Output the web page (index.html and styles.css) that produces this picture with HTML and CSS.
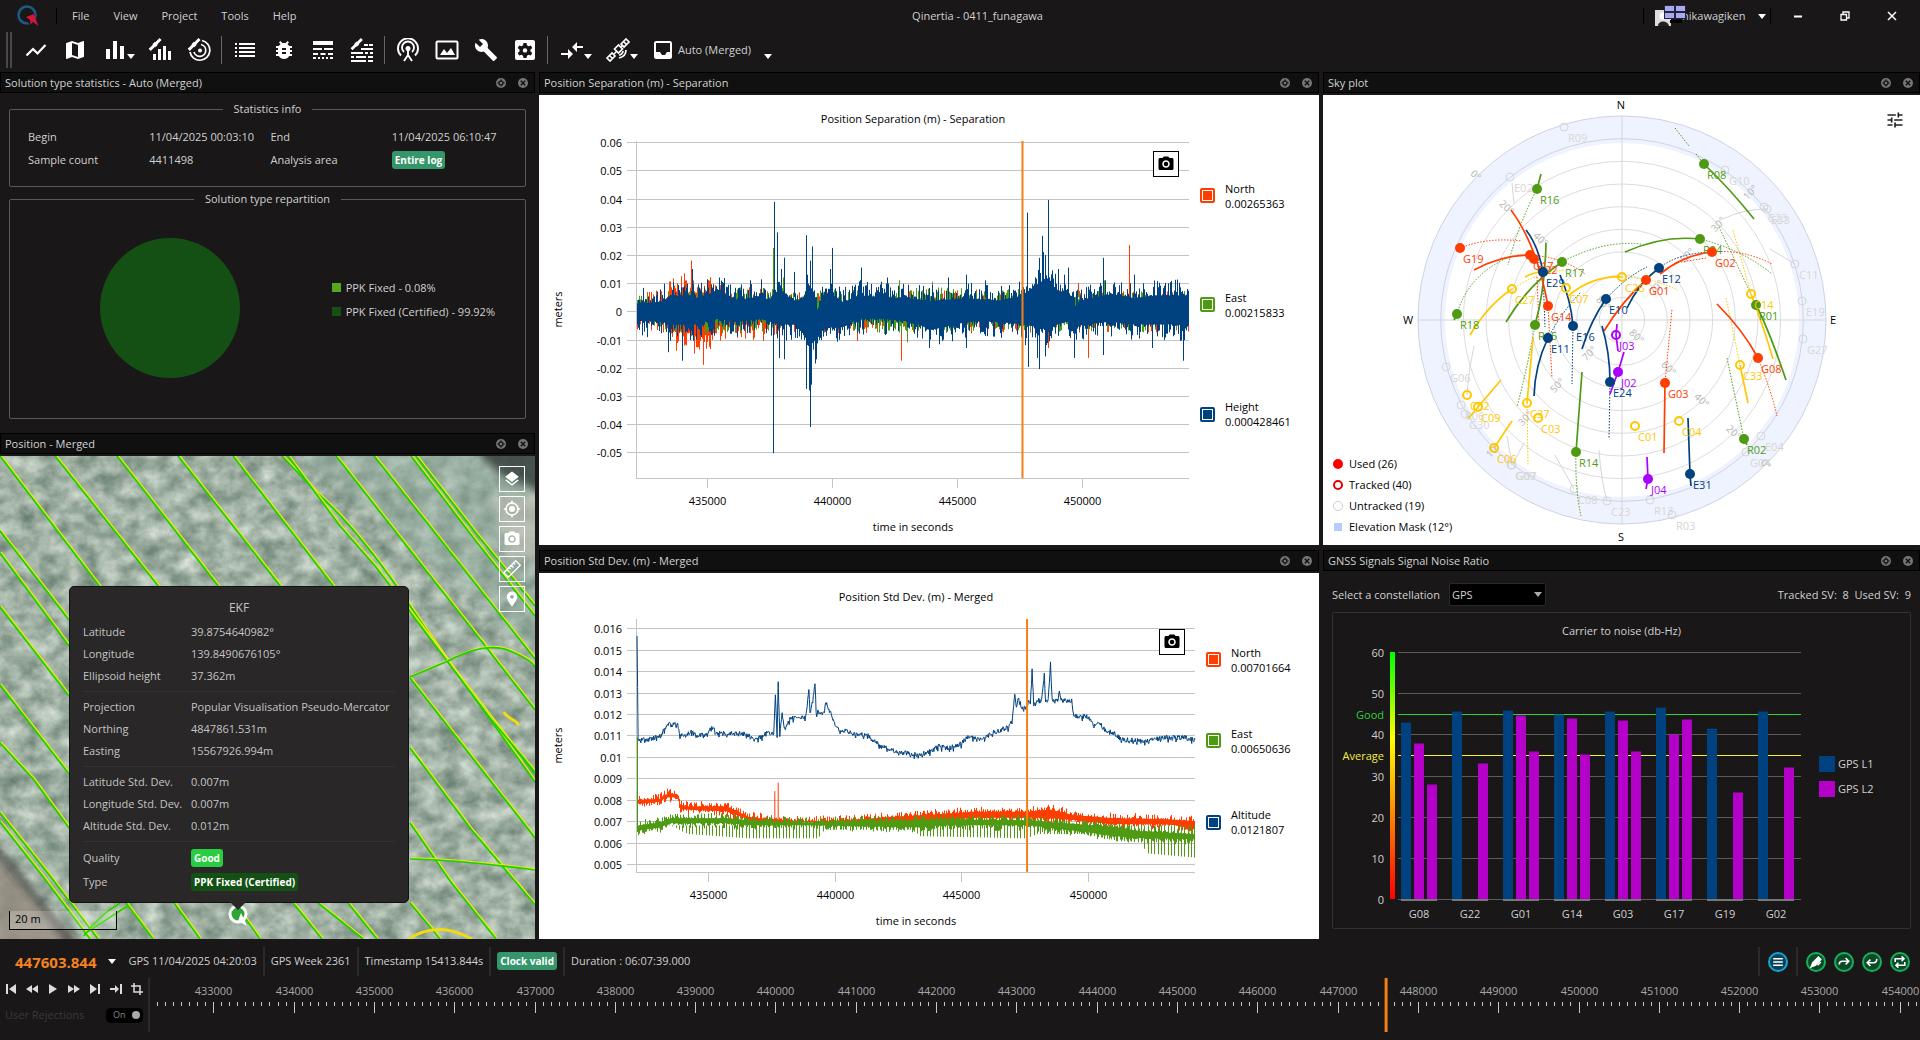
FILE: index.html
```html
<!doctype html>
<html lang="en">
  <head>
    <meta charset="utf-8">
    <meta name="viewport" content="width=device-width, initial-scale=1">

    <title>Qinertia - 0411_funagawa</title>

    <link rel="stylesheet" href="styles.css">
  </head>
  <body>

  <!-- shared icons -->
  <svg class="sprite" aria-hidden="true">
    <symbol id="i-sat" viewBox="0 0 24 24">
      <path d="M2 13l5-5 2.500 2.500-5 5zM10 5l5-5 2.500 2.500-5 5zM6.500 7.500l3-3 3.500 3.500-3 3z"/>
    </symbol>
    <symbol id="i-gear" viewBox="0 0 12 12">
      <circle cx="6" cy="6" r="5" fill="#777576"/>
      <circle cx="6" cy="6" r="2" fill="none" stroke="#1a1819" stroke-width="1.400"/>
      <path d="M6 2.200v1.600M6 8.200v1.600M2.200 6h1.600M8.200 6h1.600" stroke="#1a1819"/>
    </symbol>
    <symbol id="i-close" viewBox="0 0 12 12">
      <circle cx="6" cy="6" r="5" fill="#777576"/>
      <path d="M3.800 3.800l4.400 4.400M8.200 3.800l-4.400 4.400" stroke="#111" stroke-width="1.400"/>
    </symbol>
    <symbol id="i-camera" viewBox="0 0 24 24">
      <path fill-rule="evenodd" d="M9 2L7.170 4H4c-1.100 0-2 .9-2 2v12c0 1.100.9 2 2 2h16c1.100 0 2-.9 2-2V6c0-1.100-.9-2-2-2h-3.170L15 2H9zm3 15c-2.760 0-5-2.240-5-5s2.240-5 5-5 5 2.240 5 5-2.240 5-5 5z"/>
      <circle cx="12" cy="12" r="3"/>
    </symbol>
  </svg>

  <header class="titlebar">
    <svg class="logo" viewBox="0 0 24 24">
      <circle cx="11" cy="11" r="8.500" fill="none" stroke="#1d5a85" stroke-width="2.600"/>
      <path d="M8 12l10-3 1 4 4 9-6-3-4 1z" fill="#171516"/>
      <path d="M10 13l8-3 4.500 12-5.500-4-2.500 2-.5-4z" fill="#d3143c"/>
    </svg>
    <nav class="menu">
      <button type="button">File</button>
      <button type="button">View</button>
      <button type="button">Project</button>
      <button type="button">Tools</button>
      <button type="button">Help</button>
    </nav>
    <h1>Qinertia - 0411_funagawa</h1>
    <div class="window-side">
      <button type="button" class="user">
        <svg width="32" height="24" viewBox="0 0 32 24">
          <path d="M1 7h16v16H1z" fill="#ddd"/>
          <circle cx="9" cy="13" r="3.500" fill="#fff"/>
          <path d="M4 23c0-6 10-6 11 0z" fill="#222"/>
          <path d="M10 2h22v14H10z" fill="#23233c"/>
          <path d="M11 3h9v5h-9zM22 3h9v5h-9zM11 10h9v5h-9zM22 10h9v5h-9z" fill="#a9a9ee"/>
          <path d="M16 17h12v3H16z" fill="#000"/>
        </svg>
        <span>nikawagiken</span><i class="caret"></i>
      </button>
      <button type="button" aria-label="Minimize"><svg width="10" height="10"><path d="M1 5.500h8" stroke="#fff" stroke-width="2"/></svg></button>
      <button type="button" aria-label="Restore"><svg width="10" height="10"><path d="M1 3.500h5.500V9H1zM3 3V1h6v6H7" fill="none" stroke="#fff" stroke-width="1.300"/></svg></button>
      <button type="button" aria-label="Close"><svg width="10" height="10"><path d="M1 1l8 8M9 1L1 9" stroke="#fff" stroke-width="1.500"/></svg></button>
    </div>
  </header>

  <div class="toolbar">
    <i class="grip"></i>
    <button type="button" aria-label="Plot"><svg viewBox="0 0 24 24"><path d="M2.500 17.500L9 11l4.500 4.500L21.500 7" fill="none" stroke="#fff" stroke-width="2.200"/></svg></button>
    <button type="button" aria-label="Map"><svg viewBox="0 0 24 24"><path d="M20.500 3l-.16.030L15 5.100 9 3 3.360 4.900c-.21.070-.36.250-.36.480V20.500c0 .28.220.5.5.5l.16-.030L9 18.900l6 2.100 5.640-1.900c.21-.07.36-.25.36-.48V3.500c0-.28-.22-.5-.5-.5zM15 19l-6-2.110V5l6 2.110V19z"/></svg></button>
    <button type="button" class="drop" aria-label="Statistics"><svg viewBox="0 0 24 24"><path d="M3 11h4v10H3zM10 3h4v18h-4zM17 8h4v13h-4z"/></svg><i class="caret"></i></button>
    <button type="button" aria-label="Signal levels"><svg viewBox="0 0 24 24"><use href="#i-sat" x="-1" y="0" width="20" height="20"/><path d="M5 16h3v6H5zM10 11h3v11h-3zM15 8h3v14h-3zM20 13h3v9h-3z"/></svg></button>
    <button type="button" aria-label="Sky plot"><svg viewBox="0 0 24 24"><g fill="none" stroke="#fff" stroke-width="1.700"><path d="M15 2.500A10 10 0 1 1 3 14"/><path d="M14 6.500A6 6 0 1 1 7 14"/></g><circle cx="13" cy="12.500" r="2"/><use href="#i-sat" x="-1" y="0" width="20" height="20"/></svg></button>
    <i class="sep"></i>
    <button type="button" aria-label="Events"><svg viewBox="0 0 24 24"><path d="M2 5h2v2H2zM2 9h2v2H2zM2 13h2v2H2zM2 17h2v2H2zM6 5h16v2H6zM6 9h16v2H6zM6 13h16v2H6zM6 17h16v2H6z"/></svg></button>
    <button type="button" aria-label="Debug"><svg viewBox="0 0 24 24"><path d="M20 8h-2.810c-.45-.78-1.070-1.450-1.820-1.960L17 4.410 15.590 3l-2.170 2.170C12.960 5.060 12.490 5 12 5c-.49 0-.96.060-1.410.170L8.410 3 7 4.410l1.620 1.630C7.880 6.550 7.260 7.220 6.810 8H4v2h2.090c-.05.330-.09.660-.09 1v1H4v2h2v1c0 .340.040.670.090 1H4v2h2.810c1.040 1.790 2.970 3 5.190 3s4.150-1.210 5.190-3H20v-2h-2.090c.05-.33.090-.66.090-1v-1h2v-2h-2v-1c0-.34-.04-.67-.09-1H20V8zm-6 8h-4v-2h4v2zm0-4h-4v-2h4v2z"/></svg></button>
    <button type="button" aria-label="Timeline"><svg viewBox="0 0 24 24"><path d="M2 17h5v-2H2zm7.500 0h5v-2h-5zm7.500 0h5v-2h-5zM2 21h3v-2H2zm5 0h2v-2H7zm4 0h2v-2h-2zm4 0h2v-2h-2zm4 0h3v-2h-3zM2 12h9v-2H2zm11 0h9v-2h-9zM2 3v4h20V3z"/></svg></button>
    <button type="button" aria-label="Signal timeline"><svg viewBox="0 0 24 24"><use href="#i-sat" x="-1" y="0" width="19" height="19"/><path d="M14 6h4v2h-4zM19 6h4v2h-4zM11 10h12v2H11zM1 14h12v2H1zM15 14h3v2h-3zM20 14h3v2h-3zM1 18h3v2H1zM6 18h10v2H6zM18 18h5v2h-5zM1 22h15v2H1zM18 22h5v2h-5z"/></svg></button>
    <i class="sep"></i>
    <button type="button" aria-label="Base station"><svg viewBox="0 0 24 24"><g fill="none" stroke="#fff" stroke-width="1.900"><path d="M5 17.500A10 10 0 1 1 19 17.500"/><path d="M8 14A6 6 0 1 1 16 14"/><path d="M12 11v6l-4 6M12 17l4 6"/></g><circle cx="12" cy="10.500" r="2.500"/></svg></button>
    <button type="button" aria-label="Image"><svg viewBox="0 0 24 24"><rect x="1.500" y="3.500" width="21" height="17" rx="1" fill="none" stroke="#fff" stroke-width="2"/><path d="M5 17l4-6 3 4 4-5 4 7z"/></svg></button>
    <button type="button" aria-label="Tools"><svg viewBox="0 0 24 24"><path d="M22.700 19l-9.100-9.100c.9-2.300.4-5-1.500-6.900-2-2-5-2.400-7.400-1.300L9 6 6 9 1.600 4.700C.4 7.100.9 10.100 2.900 12.100c1.900 1.900 4.600 2.400 6.900 1.500l9.100 9.100c.4.4 1 .4 1.400 0l2.300-2.300c.5-.4.5-1.100.1-1.400z"/></svg></button>
    <button type="button" aria-label="Settings"><svg viewBox="0 0 24 24"><rect x="2" y="2" width="20" height="20" rx="2"/><path d="M10.500 5h3l.5 2.300 1.500.9 2.300-.8 1.500 2.600-1.800 1.600v1.800l1.800 1.600-1.500 2.600-2.300-.8-1.500.9-.5 2.300h-3l-.5-2.300-1.500-.9-2.300.8L4.700 15l1.800-1.600v-1.800L4.700 10l1.500-2.600 2.300.8 1.500-.9z" fill="#171516"/><circle cx="12" cy="12.400" r="2.200"/></svg></button>
    <i class="sep"></i>
    <button type="button" class="drop" aria-label="Processing direction"><svg viewBox="0 0 24 24"><path d="M1 15h7v-4l5 5-5 5v-4H1zM23 8h-6V4l-5 5 5 5v-4h6z"/></svg><i class="caret"></i></button>
    <button type="button" class="drop" aria-label="Satellites"><svg viewBox="0 0 24 24"><g fill="none" stroke="#fff" stroke-width="1.700"><path d="M15 6l5-5 3 3-5 5zM1 20l5-5 3 3-5 5zM17.500 3.500l3 3M3.500 17.500l3 3"/><path d="M8.500 11l4-4 4 4-4 4z"/><path d="M20 12c0 5-3 7-7 8M17 13c0 2-2 4-4 4M15 9l2-2M8 16l3-3"/></g></svg><i class="caret"></i></button>
    <button type="button" class="session"><svg viewBox="0 0 24 24"><path fill-rule="evenodd" d="M5 3h14c1 0 2 1 2 2v14c0 1-1 2-2 2H5c-1 0-2-1-2-2V5c0-1 1-2 2-2zm0 2v9h4l2 3h3l2-3h3V5z"/></svg><span>Auto (Merged)</span><i class="caret"></i></button>
  </div>

  <main class="docks">
    <div class="column">
      <section class="dock stats">
        <header class="dock-bar"><h2>Solution type statistics - Auto (Merged)</h2><button type="button" aria-label="Options"><svg><use href="#i-gear"/></svg></button><button type="button" aria-label="Close"><svg><use href="#i-close"/></svg></button></header>
        <div class="stats-body">
          <fieldset class="info">
            <legend>Statistics info</legend>
            <dl>
              <dt>Begin</dt><dd>11/04/2025 00:03:10</dd>
              <dt>End</dt><dd>11/04/2025 06:10:47</dd>
              <dt>Sample count</dt><dd>4411498</dd>
              <dt>Analysis area</dt><dd><span class="badge teal">Entire log</span></dd>
            </dl>
          </fieldset>
          <fieldset class="repartition">
            <legend>Solution type repartition</legend>
            <div class="share">
              <svg class="pie" viewBox="0 0 140 140"><circle cx="70" cy="70" r="70" fill="#145014"/></svg>
              <ul>
                <li class="fixed">PPK Fixed - 0.08%</li>
                <li class="certified">PPK Fixed (Certified) - 99.92%</li>
              </ul>
            </div>
          </fieldset>
        </div>
      </section>

      <section class="dock position">
        <header class="dock-bar"><h2>Position - Merged</h2><button type="button" aria-label="Options"><svg><use href="#i-gear"/></svg></button><button type="button" aria-label="Close"><svg><use href="#i-close"/></svg></button></header>
        <div class="map">
          <svg class="ground" viewBox="0 0 535 483" preserveAspectRatio="xMidYMid slice">
            <defs>
              <filter id="coarse" x="0" y="0" width="100%" height="100%" color-interpolation-filters="sRGB">
                <feTurbulence type="fractalNoise" baseFrequency=".05 .06" numOctaves="4" seed="8"/>
                <feColorMatrix values=".55 0 0 0 .35  .48 0 0 0 .45  .5 0 0 0 .39  0 0 0 0 1"/>
              </filter>
              <filter id="soft" x="-50%" y="-50%" width="200%" height="200%"><feGaussianBlur stdDeviation="4"/></filter>
            </defs>
            <rect width="535" height="483" filter="url(#coarse)"/>
            <path d="M290 -10L545 200V-10z" fill="#8fab9c" opacity=".45" filter="url(#soft)"/>
            <path d="M475 -10l20 25 50 24v-49z" fill="#2c3230" opacity=".75" filter="url(#soft)"/>
            <path d="M490 40l50 0v70l-30-10z" fill="#cfc6bf" opacity=".5" filter="url(#soft)"/>
            <path d="M-5 395l40 50 45 45H-5z" fill="#978c80" opacity=".85" filter="url(#soft)"/>
            <path d="M-5 392l38 46 40 50" stroke="#262422" stroke-width="5" fill="none" filter="url(#soft)"/>
            <g id="tracks"></g>
            <path d="M504 256c3 7 10 6 15 13" fill="none" stroke="#f0dc10" stroke-width="3"/>
            <path d="M406 485q30-22 66-2" fill="none" stroke="#f0dc10" stroke-width="3"/>
            <circle cx="238" cy="458" r="8" fill="#2fa537" stroke="#fff" stroke-width="3"/>
            <path d="M241 457l6 13-9-5z" fill="#fff"/>
          </svg>
          <div class="map-tools">
            <button type="button" aria-label="Layers"><svg viewBox="0 0 24 24"><path d="M11.990 18.540l-7.370-5.730L3 14.070l9 7 9-7-1.630-1.270-7.380 5.740zM12 16l7.360-5.730L21 9l-9-7-9 7 1.630 1.270L12 16z"/></svg></button>
            <button type="button" aria-label="Center"><svg viewBox="0 0 24 24"><g fill="none" stroke="#fff" stroke-width="2.200"><circle cx="12" cy="12" r="8"/><path d="M12 1v4M12 19v4M1 12h4M19 12h4"/></g><circle cx="12" cy="12" r="4"/></svg></button>
            <button type="button" aria-label="Snapshot"><svg viewBox="0 0 24 24"><use href="#i-camera"/></svg></button>
            <button type="button" aria-label="Measure"><svg viewBox="0 0 24 24"><path d="M1 17L17 1l6 6L7 23zM5 13l3 3M8 10l2 2M11 7l3 3M14 4l2 2" fill="none" stroke="#fff" stroke-width="1.800"/></svg></button>
            <button type="button" aria-label="Marker"><svg viewBox="0 0 24 24"><path d="M12 2C8.130 2 5 5.130 5 9c0 5.250 7 13 7 13s7-7.750 7-13c0-3.870-3.130-7-7-7zm0 9.500a2.500 2.500 0 0 1 0-5 2.500 2.500 0 0 1 0 5z"/></svg></button>
          </div>
          <div class="popup">
            <h3>EKF</h3>
            <dl>
              <dt>Latitude</dt><dd>39.8754640982°</dd>
              <dt>Longitude</dt><dd>139.8490676105°</dd>
              <dt>Ellipsoid height</dt><dd>37.362m</dd>
            </dl>
            <dl>
              <dt>Projection</dt><dd>Popular Visualisation Pseudo-Mercator</dd>
              <dt>Northing</dt><dd>4847861.531m</dd>
              <dt>Easting</dt><dd>15567926.994m</dd>
            </dl>
            <dl>
              <dt>Latitude Std. Dev.</dt><dd>0.007m</dd>
              <dt>Longitude Std. Dev.</dt><dd>0.007m</dd>
              <dt>Altitude Std. Dev.</dt><dd>0.012m</dd>
            </dl>
            <dl class="state">
              <dt>Quality</dt><dd><span class="badge good">Good</span></dd>
              <dt>Type</dt><dd><span class="badge cert">PPK Fixed (Certified)</span></dd>
            </dl>
          </div>
          <div class="scale">20 m</div>
        </div>
      </section>
    </div>

    <div class="column">
      <section class="dock separation">
        <header class="dock-bar"><h2>Position Separation (m) - Separation</h2><button type="button" aria-label="Options"><svg><use href="#i-gear"/></svg></button><button type="button" aria-label="Close"><svg><use href="#i-close"/></svg></button></header>
        <div class="chart">
          <div class="plot">
            <svg id="separation"></svg>
            <button type="button" class="snap" aria-label="Save image"><svg viewBox="0 0 24 24"><use href="#i-camera"/></svg></button>
          </div>
          <div class="legend wide">
            <label class="north"><input type="checkbox" checked><span>North<br>0.00265363</span></label>
            <label class="east"><input type="checkbox" checked><span>East<br>0.00215833</span></label>
            <label class="height"><input type="checkbox" checked><span>Height<br>0.000428461</span></label>
          </div>
        </div>
      </section>

      <section class="dock lower">
        <header class="dock-bar"><h2>Position Std Dev. (m) - Merged</h2><button type="button" aria-label="Options"><svg><use href="#i-gear"/></svg></button><button type="button" aria-label="Close"><svg><use href="#i-close"/></svg></button></header>
        <div class="chart">
          <div class="plot">
            <svg id="stddev"></svg>
            <button type="button" class="snap" aria-label="Save image"><svg viewBox="0 0 24 24"><use href="#i-camera"/></svg></button>
          </div>
          <div class="legend">
            <label class="north"><input type="checkbox" checked><span>North<br>0.00701664</span></label>
            <label class="east"><input type="checkbox" checked><span>East<br>0.00650636</span></label>
            <label class="height"><input type="checkbox" checked><span>Altitude<br>0.0121807</span></label>
          </div>
        </div>
      </section>
    </div>

    <div class="column">
      <section class="dock separation">
        <header class="dock-bar"><h2>Sky plot</h2><button type="button" aria-label="Options"><svg><use href="#i-gear"/></svg></button><button type="button" aria-label="Close"><svg><use href="#i-close"/></svg></button></header>
        <div class="sky">
          <svg id="sky" viewBox="0 0 597 450"></svg>
          <button type="button" class="tune" aria-label="Filter"><svg viewBox="0 0 24 24"><path d="M3 17v2h6v-2H3zM3 5v2h10V5H3zm10 16v-2h8v-2h-8v-2h-2v6h2zM7 9v2H3v2h4v2h2V9H7zm14 4v-2H11v2h10zm-6-4h2V7h4V5h-4V3h-2v6z"/></svg></button>
          <ul class="sky-legend">
            <li class="used">Used (26)</li>
            <li class="tracked">Tracked (40)</li>
            <li class="untracked">Untracked (19)</li>
            <li class="mask">Elevation Mask (12°)</li>
          </ul>
        </div>
      </section>

      <section class="dock lower">
        <header class="dock-bar"><h2>GNSS Signals Signal Noise Ratio</h2><button type="button" aria-label="Options"><svg><use href="#i-gear"/></svg></button><button type="button" aria-label="Close"><svg><use href="#i-close"/></svg></button></header>
        <div class="snr">
          <div class="snr-head">
            <label for="constellation">Select a constellation</label>
            <span class="select"><select id="constellation"><option>GPS</option><option>GLONASS</option><option>Galileo</option></select></span>
            <span class="counts">Tracked SV:&nbsp; 8&nbsp; Used SV:&nbsp; 9</span>
          </div>
          <div class="snr-box">
            <h3>Carrier to noise (db-Hz)</h3>
            <div class="snr-chart">
              <svg id="snr"></svg>
              <ul>
                <li class="l1">GPS L1</li>
                <li class="l2">GPS L2</li>
              </ul>
            </div>
          </div>
        </div>
      </section>
    </div>
  </main>

  <footer class="time">
    <div class="status">
      <button type="button" class="clock">447603.844<i class="caret"></i></button>
      <span>GPS 11/04/2025 04:20:03</span>
      <span>GPS Week 2361</span>
      <span>Timestamp 15413.844s</span>
      <span><b class="badge teal">Clock valid</b></span>
      <span>Duration : 06:07:39.000</span>
      <div class="actions">
        <button type="button" class="round blue" aria-label="Log"><svg viewBox="0 0 20 20"><path d="M4 6h12M4 10h12M4 14h12"/></svg></button>
        <i class="bar"></i>
        <button type="button" class="round" aria-label="Edit"><svg viewBox="0 0 20 20"><path d="M4 16l2-5 3 3zM7 10l6-6 3 3-6 6zM12 14l4-4" fill="#fff"/></svg></button>
        <button type="button" class="round" aria-label="Forward"><svg viewBox="0 0 20 20"><path d="M4 13c0-3 1-4 4-4h8M12 5l4 4-4 4"/></svg></button>
        <button type="button" class="round" aria-label="Backward"><svg viewBox="0 0 20 20"><path d="M16 6c0 3-1 5-4 5H4M8 7l-4 4 4 4"/></svg></button>
        <button type="button" class="round" aria-label="Merge"><svg viewBox="0 0 20 20"><path d="M4 10V6h11M12 3l3 3-3 3M16 10v4H5M8 11l-3 3 3 3"/></svg></button>
      </div>
    </div>
    <div class="timeline">
      <div class="player">
        <div class="keys">
          <button type="button" aria-label="First"><svg viewBox="0 0 12 12"><path d="M1 1h2v10H1zM11 1v10L4 6z"/></svg></button>
          <button type="button" aria-label="Rewind"><svg viewBox="0 0 12 12"><path d="M6 2v8L0 6zM12 2v8L6 6z"/></svg></button>
          <button type="button" aria-label="Play"><svg viewBox="0 0 12 12"><path d="M2 1l8 5-8 5z"/></svg></button>
          <button type="button" aria-label="Fast forward"><svg viewBox="0 0 12 12"><path d="M0 2l6 4-6 4zM6 2l6 4-6 4z"/></svg></button>
          <button type="button" aria-label="Last"><svg viewBox="0 0 12 12"><path d="M9 1h2v10H9zM1 1l7 5-7 5z"/></svg></button>
          <button type="button" aria-label="Go to"><svg viewBox="0 0 12 12"><path d="M10 1h2v10h-2zM0 5h5V2l4 4-4 4V7H0z"/></svg></button>
          <button type="button" aria-label="Crop"><svg viewBox="0 0 12 12"><path d="M3 0v9h9M0 3h9v9" fill="none" stroke="#ddd" stroke-width="1.500"/></svg></button>
        </div>
        <label class="reject">User Rejections <span class="toggle">On<input type="checkbox" checked disabled></span></label>
      </div>
      <svg id="ruler"></svg>
    </div>
  </footer>

  <script src="app.js"></script>
  </body>
</html>
```

FILE: styles.css
```css
*, *::before, *::after {
  box-sizing: border-box;
}

body {
  margin: 0;
  height: 100vh;
  min-height: 800px;
  display: flex;
  flex-direction: column;
  background-color: #191718;
  color: #d0d0d0;
  font-family: "Open Sans", "Noto Sans", sans-serif;
  font-size: 11px;
  line-height: 16px;
  overflow: hidden;
}

h1, h2, h3, dl, dd, ul {
  margin: 0;
  padding: 0;
  font-size: 11px;
  font-weight: normal;
  list-style: none;
}

button {
  display: flex;
  align-items: center;
  justify-content: center;
  padding: 0;
  border: 0;
  background: none;
  color: inherit;
  font: inherit;
}

svg {
  display: block;
  flex-shrink: 0;
  fill: #fff;
}

svg text {
  font-family: "Open Sans", "Noto Sans", sans-serif;
  font-size: 11px;
}

.sprite {
  display: none;
}

.caret {
  border: 4px solid transparent;
  border-top: 5px solid #fff;
  border-bottom: 0;
}

.badge {
  display: inline-block;
  height: 18px;
  padding: 0 3px;
  border-radius: 3px;
  color: #fff;
  font-size: 10px;
  font-weight: bold;
  line-height: 18px;
}

.teal { background-color: #35966b; }
.good { background-color: #28cd41; }
.cert { background-color: #145014; }

/* title bar */

.titlebar {
  display: grid;
  grid-template-columns: 1fr auto 1fr;
  align-items: center;
  height: 32px;
  padding: 0 5px 0 16px;
  grid-template-areas: "left mid right";
}

.logo {
  grid-area: left;
  width: 24px;
  height: 24px;
}

.menu {
  grid-area: left;
  display: flex;
  gap: 24px;
  margin-left: 40px;
  padding-left: 15px;
  border-left: 1px solid #000;
}

.titlebar h1 {
  grid-area: mid;
  padding-left: 24px;
}

.window-side {
  grid-area: right;
  display: flex;
  justify-content: flex-end;
}

.window-side button {
  width: 47px;
}

.window-side .user {
  position: relative;
  width: 128px;
  margin-right: 3px;
  padding: 0 4px 0 24px;
  border: solid #000;
  border-width: 0 1px;
  justify-content: space-between;
}

.user svg {
  position: absolute;
  left: 10px;
  top: -5px;
}

.user span {
  padding-left: 14px;
}

/* toolbar */

.toolbar {
  display: flex;
  align-items: center;
  height: 40px;
  padding: 0 0 4px 6px;
}

.toolbar button {
  width: 39px;
  height: 32px;
}

.toolbar svg {
  width: 24px;
  height: 24px;
}

.toolbar .drop {
  width: 46px;
}

.toolbar .drop svg {
  margin-left: 2px;
}

.toolbar .caret {
  margin: 12px -2px 0 0;
}

.toolbar .session {
  width: auto;
  padding-left: 8px;
}

.session span {
  margin: 0 13px 0 3px;
}

.grip {
  width: 6px;
  height: 36px;
  margin-right: 4px;
  border: solid #4a4849;
  border-width: 0 2px;
}

.sep {
  width: 1px;
  height: 28px;
  margin: 0 3px;
  background-color: #666;
}

/* docks */

.docks {
  flex: 1;
  min-height: 0;
  display: grid;
  grid-template-columns: 535fr 780fr 597fr;
  gap: 4px;
}

.column {
  display: flex;
  flex-direction: column;
  gap: 5px;
  min-width: 0;
  min-height: 0;
}

.dock {
  display: flex;
  flex-direction: column;
  min-height: 0;
}

.stats { flex: 356 1 0; }
.position { flex: 506 1 0; }
.separation { flex: 473 1 0; }
.lower { flex: 389 1 0; }

.dock-bar {
  display: flex;
  align-items: center;
  height: 21px;
  margin-bottom: 2px;
  padding-left: 4px;
  border: 1px solid #000;
  background-color: #111011;
}

.dock-bar h2 {
  flex: 1;
}

.dock-bar button {
  width: 22px;
}

.dock-bar svg {
  width: 12px;
  height: 12px;
}

/* statistics */

.stats-body {
  flex: 1;
  display: flex;
  flex-direction: column;
  gap: 4px;
  padding: 6px 9px 9px;
}

fieldset {
  margin: 0;
  padding: 0 18px;
  border: 1px solid #5a5a5a;
  border-radius: 2px;
}

legend {
  margin: 0 auto;
  padding: 0 11px;
}

.info {
  height: 86px;
}

.info dl {
  display: grid;
  grid-template-columns: repeat(4, 1fr);
  grid-auto-rows: 23px;
  align-items: center;
  margin-top: 8px;
  margin-right: -6px;
}

.repartition {
  flex: 1;
}

.share {
  display: flex;
  align-items: center;
  justify-content: space-between;
  height: 100%;
  padding: 0 12px 10px 72px;
}

.pie {
  width: 140px;
}

.share ul {
  padding-bottom: 16px;
}

.share li {
  display: flex;
  align-items: center;
  gap: 5px;
  height: 24px;
}

.share li::before {
  content: "";
  width: 9px;
  height: 9px;
  background-color: #145014;
}

.share .fixed::before {
  background-color: #55a820;
}

/* map */

.map {
  position: relative;
  flex: 1;
  min-height: 0;
  overflow: hidden;
}

.ground {
  width: 100%;
  height: 100%;
}

.map-tools {
  position: absolute;
  top: 10px;
  right: 10px;
  display: flex;
  flex-direction: column;
  gap: 4px;
}

.map-tools button {
  width: 26px;
  height: 26px;
  border: 1px solid #fff;
}

.map-tools svg {
  width: 18px;
  height: 18px;
}

.popup {
  position: absolute;
  left: 69px;
  bottom: 36px;
  width: 340px;
  padding: 13px;
  padding-bottom: 8px;
  border: 1px solid #111;
  border-radius: 5px;
  background-color: #292728;
  color: #c4c4c4;
}

.popup::after {
  content: "";
  position: absolute;
  left: 160px;
  top: 100%;
  border: 8px solid transparent;
  border-top-color: #292728;
  border-bottom: 0;
}

.popup h3 {
  height: 21px;
  font-size: 12px;
  text-align: center;
}

.popup dl {
  display: grid;
  grid-template-columns: 108px 1fr;
  grid-auto-rows: 22px;
  align-items: center;
  margin-bottom: 4px;
  padding-bottom: 4px;
  border-bottom: 1px solid #333132;
  white-space: nowrap;
}

.popup .state {
  grid-auto-rows: 24px;
  margin: 0;
  padding: 0;
  border: 0;
}

.scale {
  position: absolute;
  left: 9px;
  bottom: 9px;
  width: 108px;
  height: 19px;
  padding-left: 5px;
  border: 1px solid #000;
  border-top: 0;
  background-color: rgba(255, 255, 255, 0.2);
  color: #000;
}

/* line charts */

.chart {
  flex: 1;
  min-height: 0;
  display: flex;
  background-color: #fff;
  color: #000;
}

.plot {
  position: relative;
  flex: 1;
  min-width: 0;
}

.plot > svg {
  width: 100%;
  height: 100%;
}

.plot text {
  fill: #000;
}

.snap {
  position: absolute;
  top: 56px;
  right: 21px;
  width: 26px;
  height: 26px;
  border: 1px solid #000;
  background-color: #fff;
}

.snap svg {
  width: 18px;
  height: 18px;
  fill: #000;
}

.legend {
  width: 113px;
  padding: 46px 0 76px;
  display: flex;
  flex-direction: column;
  justify-content: space-around;
  line-height: 15px;
}

.wide {
  width: 119px;
}

.legend label {
  display: flex;
  align-items: center;
  gap: 10px;
}

.legend input {
  appearance: none;
  width: 15px;
  height: 15px;
  margin: 0;
  border: 2px solid;
  border-radius: 2px;
  background-color: currentColor;
  box-shadow: inset 0 0 0 1px #fff;
}

.north input { color: #ff3d00; }
.east input { color: #4e9a12; }
.height input { color: #00417f; }

/* sky plot */

.sky {
  position: relative;
  flex: 1;
  min-height: 0;
  background-color: #fff;
  color: #000;
}

.sky > svg {
  width: 100%;
  height: 100%;
  fill: none;
}

.sky .ring {
  font-size: 10px;
}

.tune {
  position: absolute;
  top: 15px;
  right: 15px;
}

.tune svg {
  width: 20px;
  height: 20px;
  fill: #222;
}

.sky-legend {
  position: absolute;
  left: 10px;
  bottom: 8px;
}

.sky-legend li {
  display: flex;
  align-items: center;
  gap: 6px;
  height: 21px;
}

.sky-legend li::before {
  content: "";
  width: 10px;
  height: 10px;
  border: 2px solid #e60000;
  border-radius: 50%;
}

.sky-legend .used::before { background-color: #f00; border-color: #f00; }
.sky-legend .untracked::before { border: 1px solid #ccc; }
.sky-legend .mask::before { border: 1px solid #fff; border-radius: 0; background-color: #b4ccff; }

/* signal noise ratio */

.snr {
  flex: 1;
  min-height: 0;
  display: flex;
  flex-direction: column;
  padding: 10px 9px;
}

.snr-head {
  display: flex;
  align-items: center;
  gap: 9px;
  height: 23px;
}

.select {
  position: relative;
}

.select::after {
  content: "";
  position: absolute;
  right: 4px;
  top: 9px;
  border: 4px solid transparent;
  border-top: 5px solid #aaa;
  border-bottom: 0;
}

select {
  appearance: none;
  width: 97px;
  height: 23px;
  padding: 0 2px;
  border: 1px solid #2a2829;
  border-radius: 2px;
  background-color: #000;
  color: inherit;
  font: inherit;
}

.counts {
  margin-left: auto;
}

.snr-box {
  flex: 1;
  min-height: 0;
  display: flex;
  flex-direction: column;
  margin-top: 6px;
  border: 1px solid #333132;
  border-radius: 2px;
}

.snr-box h3 {
  padding-top: 10px;
  text-align: center;
}

.snr-chart {
  flex: 1;
  min-height: 0;
  display: flex;
}

.snr-chart > svg {
  flex: 1;
  min-width: 0;
  height: 100%;
}

.snr-chart ul {
  width: 109px;
  padding: 112px 0 0 18px;
}

.snr-chart li {
  display: flex;
  align-items: center;
  gap: 3px;
  height: 25px;
}

.snr-chart li::before {
  content: "";
  width: 16px;
  height: 16px;
  background-color: #00417f;
}

.snr-chart .l2::before {
  background-color: #b400c8;
}

/* time bar */

.time {
  height: 101px;
  padding-top: 6px;
}

.status {
  display: flex;
  align-items: center;
  height: 33px;
  padding-left: 15px;
}

.status > span {
  padding: 5px 6px;
  height: 29px;
  line-height: 18px;
  border-left: 2px solid #2c2a2b;
}

.status > span:nth-of-type(1) {
  border: 0;
}

.clock {
  margin-right: 6px;
  color: #f58220;
  font-size: 15px;
  font-weight: bold;
  gap: 12px;
}

.actions {
  display: flex;
  align-items: center;
  gap: 8px;
  margin-left: auto;
  padding: 0 10px 0 8px;
  border-left: 2px solid #2c2a2b;
}

.bar {
  width: 2px;
  height: 29px;
  background-color: #2c2a2b;
}

.round {
  width: 20px;
  height: 20px;
  border: 2px solid #18b05a;
  border-radius: 50%;
  background-color: #0a4a28;
}

.blue {
  border-color: #12a5d0;
  background-color: #0c4258;
}

.round svg {
  width: 16px;
  height: 16px;
  fill: none;
  stroke: #fff;
  stroke-width: 2;
}

.timeline {
  display: flex;
  height: 54px;
}

.player {
  width: 150px;
  border-right: 2px solid #2c2a2b;
}

.keys {
  display: flex;
  gap: 9px;
  padding: 5px 5px 0;
}

.keys svg {
  width: 12px;
  height: 12px;
  fill: #ddd;
}

.reject {
  display: flex;
  align-items: center;
  justify-content: space-between;
  padding: 12px 5px 0;
  color: #3c3a3b;
}

.toggle {
  display: flex;
  align-items: center;
  justify-content: space-between;
  width: 37px;
  height: 15px;
  padding: 0 3px 0 7px;
  border-radius: 5px;
  background-color: #000;
  color: #888;
  font-size: 9px;
}

.toggle input {
  appearance: none;
  width: 8px;
  height: 8px;
  margin: 0;
  border-radius: 50%;
  background-color: #aaa;
}

#ruler {
  flex: 1;
  min-width: 0;
  height: 54px;
}
```

FILE: app.js
```js
var ORANGE = '#f57f17', RED = '#ff3d00', GREEN = '#4e9a12', BLUE = '#00417f', YELLOW = '#ffc800', PURPLE = '#aa00ff';
var NOW = 447603.844;
var seed = 7;

var rnd = function() {
  seed = (seed * 16807) % 2147483647;
  return seed / 2147483647;
}

var line = function(x1, y1, x2, y2, color, w) {
  return '<line x1="' + x1 + '" y1="' + y1 + '" x2="' + x2 + '" y2="' + y2 + '" stroke="' + color + '" stroke-width="' + (w || 1) + '"/>';
}

var text = function(x, y, s, anchor, extra) {
  return '<text x="' + x + '" y="' + y + '" text-anchor="' + (anchor || 'middle') + '" ' + (extra || '') + '>' + s + '</text>';
}

var path = function(d, color, w, extra) {
  return '<path d="' + d + '" fill="none" stroke="' + color + '" stroke-width="' + (w || 1) + '" ' + (extra || '') + '/>';
}

// linear interpolation in a list of [position, value...]
var at = function(list, p, k) {
  for(var i = 1; i < list.length; i++) {
    if(p <= list[i][0]) {
      var a = list[i-1], b = list[i];
      return a[k] + (b[k] - a[k]) * (p - a[0]) / (b[0] - a[0]);
    }
  }
  return list[list.length-1][k];
}

var frame = function(svg, o) {
  var w = svg.clientWidth, h = svg.clientHeight;
  var c = { l: 98, r: w - 11, t: 46, b: h - 67 };
  c.x = function(t) { return c.l + (t - o.t0) / (o.t1 - o.t0) * (c.r - c.l); }
  c.p = function(p) { return c.l + p / 1000 * (c.r - c.l); }
  c.y = function(v) { return c.b - (v - o.min) / (o.max - o.min) * (c.b - c.t); }
  var s = text((c.l + c.r) / 2, 28, o.title);
  o.ticks.forEach(function(v) {
    var y = Math.round(c.y(v)) + .5;
    s += line(c.l - 10, y, c.r, y, '#c4c4c4', 1) + text(83, y + 4, v, 'end');
  });
  for(var t = 435000; t <= 450000; t += 5000) {
    var x = Math.round(c.x(t)) + .5;
    s += line(x, c.b, x, c.b + 10, '#c4c4c4') + text(x, c.b + 27, t);
  }
  s += line(c.l - .5, c.t, c.l - .5, c.b, '#c4c4c4') + line(c.l - 1, c.b + .5, c.r, c.b + .5, '#c4c4c4');
  s += text((c.l + c.r) / 2, c.b + 53, 'time in seconds');
  s += text(0, 0, 'meters', 'middle', 'transform="translate(23 ' + (c.t + c.b) / 2 + ') rotate(-90)"');
  c.html = s;
  return c;
}

// one vertical stroke per pixel column between the two envelopes
var band = function(c, env, noise, spikes) {
  var d = '';
  for(var x = c.l; x < c.r; x++) {
    var p = (x - c.l) / (c.r - c.l) * 1000;
    var hi = at(env, p, 1), lo = at(env, p, 2);
    hi += (Math.pow(rnd(), 2.5) * 1.3 - .3) * noise;
    lo -= (Math.pow(rnd(), 2.5) * 1.3 - .3) * noise;
    d += 'M' + (x + .5) + ' ' + c.y(hi).toFixed(1) + 'V' + c.y(lo).toFixed(1);
  }
  (spikes || []).forEach(function(s) {
    var sx = Math.round(c.p(s[0])) + .5;
    d += 'M' + sx + ' ' + c.y(0.005).toFixed(1) + 'V' + c.y(s[1]).toFixed(1);
  });
  return d;
}

var drawSeparation = function() {
  var svg = document.getElementById('separation');
  var ticks = ['0.06','0.05','0.04','0.03','0.02','0.01','0','-0.01','-0.02','-0.03','-0.04','-0.05'];
  var c = frame(svg, { title: 'Position Separation (m) - Separation', t0: 432203, t1: 454255, min: -.0591, max: .0604, ticks: ticks });
  seed = 7;
  var north = [[0,.003,-.003],[48,.004,-.004],[60,.008,-.008],[130,.008,-.010],[150,.005,-.006],[210,.004,-.006],[240,.003,-.004],[440,.003,-.0035],[780,.0035,-.0035],[1000,.003,-.003]];
  var east = [[0,.002,-.003],[60,.004,-.004],[130,.005,-.005],[320,.005,-.003],[420,.004,-.004],[460,.005,-.005],[600,.005,-.004],[800,.004,-.004],[1000,.004,-.004]];
  var height = [[0,.004,-.0045],[45,.0048,-.005],[60,.007,-.006],[105,.006,-.006],[145,.0085,-.004],[185,.005,-.005],[225,.007,-.004],[240,.005,-.005],[255,.009,-.006],[285,.005,-.006],[300,.006,-.009],[310,.011,-.013],[320,.008,-.012],[326,.002,-.011],[335,.005,-.008],[350,.008,-.007],[372,.004,-.007],[400,.007,-.004],[440,.0065,-.004],[500,.0055,-.005],[530,.005,-.008],[600,.006,-.005],[650,.005,-.005],[700,.007,-.006],[725,.011,-.007],[745,.013,-.008],[760,.008,-.006],[780,.009,-.005],[792,.003,-.010],[800,.005,-.006],[860,.0075,-.005],[900,.006,-.006],[940,.007,-.006],[1000,.007,-.006]];
  var s = path(band(c, north, .0045, [[98,.018],[86,.0135],[120,-.019],[82,-.016],[103,-.015],[70,-.014],[267,.019],[478,-.0175],[892,.0235],[817,-.0165],[799,.010],[306,-.013],[745,-.013],[399,-.0105],[228,-.0105]]), RED);
  s += path(band(c, east, .0035, [[247,.0225],[264,.012],[474,.011],[534,.0105],[490,-.011],[846,.011]]), GREEN);
  s += path(band(c, height, .0045, [[249,.0388],[247,-.0503],[253,.028],[254,.02],[260,.015],[257,-.0165],[267,.019],[267,-.017],[284,.014],[307,.027],[307,-.0275],[311,-.028],[313,.018],[313,-.041],[315,-.026],[317,.023],[322,-.0185],[325,-.017],[349,.015],[353,.0225],[405,.0155],[453,.012],[529,-.013],[564,.012],[596,.013],[596,-.013],[631,.011],[703,-.012],[707,.035],[708,-.0197],[724,-.0165],[729,.019],[729,-.0205],[733,.0268],[735,.021],[740,.02],[740,-.016],[745,.0395],[751,.0145],[762,.015],[774,.013],[781,.0155],[792,-.0165],[845,.019],[845,-.0155],[901,.013],[933,-.013],[990,-.0175],[57,-.0145],[81,-.0175],[99,.015],[149,.012],[205,.011]]), BLUE);
  var x = c.x(NOW);
  svg.innerHTML = c.html + s + line(x, c.t, x, c.b, ORANGE, 2);
}

var altitude = [[0,15.64],[2,10.83],[21,10.8],[43,11],[54,11.5],[73,11.5],[77,11.05],[88,11],[97,11.15],[106,11],[125,11.05],[134,11.4],[143,11.1],[188,11.1],[215,10.85],[233,11.1],[245,11.1],[248,12.9],[251,11],[253,13.4],[256,11.05],[260,12.1],[263,11.4],[269,11.45],[275,11.8],[303,11.9],[308,13.2],[310,12.1],[315,12.6],[319,13.4],[321,12.1],[332,12],[339,12.5],[346,12.1],[359,11.3],[386,11.1],[413,11],[436,10.5],[458,10.3],[504,10.1],[522,10.2],[540,10.5],[558,10.4],[580,10.6],[594,10.95],[612,10.8],[639,11.15],[666,11.4],[673,11.75],[677,12.9],[680,12.4],[684,12.75],[689,12.3],[698,12.3],[702,12.6],[705,12.4],[708,14],[711,12.45],[720,12.7],[724,12.5],[730,13.85],[732,12.5],[737,12.7],[741,14.4],[744,12.65],[754,12.6],[757,13.15],[760,12.65],[779,12.6],[783,11.9],[801,11.9],[810,11.85],[818,11.5],[828,11.65],[838,11.25],[856,11.1],[869,10.8],[910,10.75],[946,10.9],[982,10.9],[1000,10.8]];

var drawStdDev = function() {
  var svg = document.getElementById('stddev');
  var ticks = ['0.016','0.015','0.014','0.013','0.012','0.011','0.01','0.009','0.008','0.007','0.006','0.005'];
  var c = frame(svg, { title: 'Position Std Dev. (m) - Merged', t0: 432182, t1: 454244, min: .00463, max: .01643, ticks: ticks });
  seed = 11;
  var mm = function(l) { return l.map(function(a) { return [a[0], a[1] / 1000, a[2] / 1000]; }); }
  var north = mm([[0,8.05,7.75],[40,8.1,7.85],[54,8.35,8.1],[73,8.3,8],[78,7.75,7.5],[160,7.75,7.4],[200,7.25,7],[240,7.15,6.9],[300,7.05,6.9],[380,7.1,6.9],[450,7.25,6.9],[550,7.4,7],[600,7.5,7.1],[700,7.5,7.1],[740,7.6,7.1],[780,7.35,7],[850,7.2,6.8],[950,7.15,6.8],[1000,7.05,6.6]]);
  var east = mm([[0,6.85,6.5],[40,7,6.65],[60,7.2,6.85],[160,7.2,6.85],[200,7.1,6.75],[300,7,6.75],[500,7.1,6.65],[560,7.15,6.75],[700,7.1,6.75],[800,6.9,6.45],[850,6.8,6.25],[900,6.6,6.15],[1000,6.45,6.1]]);
  var dips = [[0,6.4],[60,6.8],[90,6.4],[200,6.2],[325,6.2],[335,6.6],[495,6.6],[505,6.3],[700,6.2],[715,6.4],[800,6.4],[860,6.1],[905,6.0],[912,5.5],[1000,5.3]];
  var s = path(band(c, north, .0002) + 'M' + c.p(247) + ' ' + c.y(.0084) + 'V' + c.y(.007) + 'M' + c.p(253) + ' ' + c.y(.0088) + 'V' + c.y(.007), RED);
  var d = band(c, east, .0002) + 'M' + (c.l + .5) + ' ' + c.y(.0109) + 'V' + c.y(.0065);
  for(var p = 3; p < 1000; p += 6) {
    d += 'M' + (Math.round(c.p(p)) + .5) + ' ' + c.y(.0068) + 'V' + c.y(at(dips, p, 1) / 1000);
  }
  s += path(d, GREEN);
  d = 'M';
  for(p = 0; p <= 1000; p += 1) {
    var n = p < 2 ? 0 : (rnd() - .5) * .22;
    if(p > 2 && p % 7 == 0) n -= .12;
    d += c.p(p).toFixed(1) + ' ' + c.y((at(altitude, p, 1) + n) / 1000).toFixed(1) + ' ';
  }
  s += path(d, BLUE);
  var x = c.x(NOW);
  svg.innerHTML = c.html + s + line(x, c.t, x, c.b, ORANGE, 2);
}

// [name, x, y, color, used]
var sats = [
  ['R08',381,69,GREEN,1],['R16',214,94,GREEN,1],['R24',377,144,GREEN,1],['G02',389,157,RED,1],['G19',137,153,RED,1],
  ['G17',207,160,RED,1],['G22',211,164,RED,1],['R17',239,167,GREEN,1],['E12',336,173,BLUE,1],['G01',323,185,RED,1],
  ['E29',220,177,BLUE,1],['E10',283,204,BLUE,1],['G14',225,211,RED,1],['R18',134,219,GREEN,1],['R15',212,230,GREEN,1],
  ['E16',250,231,BLUE,1],['E11',225,243,BLUE,1],['E24',287,287,BLUE,1],['J02',295,277,PURPLE,1],['J03',293,240,PURPLE,0],
  ['G03',342,288,RED,1],['G08',435,263,RED,1],['R01',433,210,GREEN,1],['R02',421,344,GREEN,1],['R14',253,357,GREEN,1],
  ['J04',325,384,PURPLE,1],['E31',367,379,BLUE,1],['C27',189,194,YELLOW,0],['C07',243,193,YELLOW,0],['C26',299,182,YELLOW,0],
  ['C14',428,199,YELLOW,0],['C33',417,270,YELLOW,0],['C37',204,308,YELLOW,0],['C03',215,323,YELLOW,0],['C02',144,300,YELLOW,0],
  ['C09',155,312,YELLOW,0],['C06',171,353,YELLOW,0],['C01',312,331,YELLOW,0],['C04',356,326,YELLOW,0]
];

var untracked = [
  ['R09',241,32],['E02',187,82],['G10',402,75],['E33',444,114],['C23',441,112],['C11',472,169],['E19',479,206],['G27',480,244],
  ['G06',123,272],['R06',138,310],['G30',142,319],['G07',189,370],['G09',188,370],['C08',251,394],['C23',284,406],['R13',327,405],
  ['R03',349,420],['G04',423,357],['E04',438,341]
];

var trails = [
  [GREEN,'M381 69Q408 95 431 124M218 79L214 94M302 157Q340 140 377 144M223 148Q222 195 212 230M183 227Q205 190 239 167M134 219L131 225M433 210Q446 235 463 285M421 344L424 350M259 277L253 357'],
  [RED,'M337 179Q360 160 389 157M151 175Q178 160 207 160M188 115Q214 150 225 211M281 236Q300 205 323 185M342 288L341 358M394 209Q420 235 435 263'],
  [BLUE,'M203 135Q215 150 220 177M237 180Q248 205 250 231M211 301Q212 270 225 243M259 254Q268 225 283 204M304 213Q316 188 336 173M279 231Q287 258 287 287M365 323L367 379 368 391'],
  [YELLOW,'M147 240Q165 210 189 194M202 182Q211 177 220 177M245 201Q270 180 299 182M428 199Q440 230 450 264M417 270L425 308M210 243L204 308M178 285L155 312 145 324M189 326L171 353'],
  [PURPLE,'M294 229L293 240 295 256M301 257L295 277 287 299M324 362L325 384 323 394']
];

var dotted = [
  [GREEN,'M352 33L366 51M373 59L381 69M214 94Q195 130 185 170M377 144Q420 155 449 179M212 230Q205 270 194 312M239 167Q280 145 318 149M134 219Q145 180 186 162M396 132Q412 165 433 210M404 263L421 344M253 357Q252 395 258 421'],
  [RED,'M389 157Q420 154 449 169M358 167L383 163M137 153Q165 142 198 146M207 160Q240 162 262 179M225 211L229 283M214 182L216 231M342 288L349 214M435 263Q448 295 454 321'],
  [BLUE,'M220 177L222 232M250 231L249 289M225 243Q240 215 258 197M283 204Q303 182 324 172M336 173Q355 158 389 157M287 287L286 344'],
  [YELLOW,'M189 194Q215 177 242 175M299 182Q330 183 355 195M410 135L428 199M403 203L417 270M204 308L205 371']
];

var drawSky = function() {
  var cx = 299, cy = 225, R = 204, s = '';
  s += '<circle cx="299" cy="225" r="190.5" stroke="#eff3ff" stroke-width="27"/>';
  for(var i = 1; i <= 9; i++) s += '<circle cx="' + cx + '" cy="' + cy + '" r="' + (R * i / 9) + '" stroke="' + (i > 7 ? '#ccd3e2' : '#dcdcdf') + '"/>';
  s += line(cx, cy - R, cx, cy + R, '#d5d5da') + line(cx - R, cy, cx + R, cy, '#d5d5da');
  [['0',153,80,45],['20',184,112,45],['40',218,144,45],['80',281,208,45],['10',427,97,-45],['30',395,129,-45],['50',364,160,-45],['70',333,192,-45],
   ['80',314,241,45],['60',346,273,45],['40',379,305,45],['20',411,337,45],['0',443,369,45],['70',266,258,-45],['50',234,290,-45],['30',202,323,-45],['10',170,355,-45]].forEach(function(r) {
    s += text(0, 4, r[0] + '°', 'middle', 'class="ring" fill="#b4b4b4" transform="translate(' + r[1] + ' ' + r[2] + ') rotate(' + r[3] + ')"');
  });
  s += path('M151 251Q145 280 144 300M184 341L189 370M201 348L189 370M232 360L251 394M276 355Q278 385 284 406M400 124Q420 114 444 114M447 154L472 169M189 88L191 108', '#d6d6d6');
  untracked.forEach(function(u) {
    s += '<circle cx="' + u[1] + '" cy="' + u[2] + '" r="4" stroke="#d6d6d6"/>' + text(u[1] + 4, u[2] + 15, u[0], 'start', 'fill="#d6d6d6"');
  });
  dotted.forEach(function(t) { s += path(t[1], t[0], 1, 'stroke-dasharray="1.5 1.5"'); });
  trails.forEach(function(t) { s += path(t[1], t[0], 1.7); });
  sats.forEach(function(a) {
    s += '<circle cx="' + a[1] + '" cy="' + a[2] + '" r="' + (a[4] ? 5 : 4) + '" stroke="' + a[3] + '"' + (a[4] ? ' fill="' + a[3] + '" stroke-width="0"' : ' stroke-width="2"') + '/>';
    s += text(a[1] + 3, a[2] + 15, a[0], 'start', 'fill="' + a[3] + '"');
  });
  s += text(298, 14, 'N', 'middle', 'fill="#000"') + text(510, 229, 'E', 'middle', 'fill="#000"') + text(298, 446, 'S', 'middle', 'fill="#000"') + text(85, 229, 'W', 'middle', 'fill="#000"');
  document.getElementById('sky').innerHTML = s;
}

var drawSnr = function() {
  var svg = document.getElementById('snr');
  var w = svg.clientWidth, h = svg.clientHeight;
  var l = 65, r = w, t = 13, b = h - 29;
  var y = function(v) { return Math.round(b - v / 60 * (b - t)) + .5; }
  var s = '<defs><linearGradient id="ramp" x1="0" y1="0" x2="0" y2="1"><stop offset="0" stop-color="#0f0"/><stop offset=".35" stop-color="#ff0"/><stop offset="1" stop-color="#f00"/></linearGradient></defs>';
  s += '<rect x="57" y="' + t + '" width="5" height="' + (b - t) + '" fill="url(#ramp)"/>';
  for(var v = 0; v <= 60; v += 10) s += line(l, y(v), r, y(v), '#5c5a5b') + text(51, y(v) + 4, v, 'end', 'fill="#d0d0d0"');
  s += line(l, y(45), r, y(45), '#2ed03e') + text(51, y(45) + 4, 'Good', 'end', 'fill="#2ed03e"');
  s += line(l, y(35), r, y(35), '#f2f03c') + text(51, y(35) + 4, 'Average', 'end', 'fill="#f2f03c"');
  [['G08',43,38,28],['G22',45.7,0,33],['G01',46,44.7,36],['G14',45,44,35.3],['G03',45.7,43.5,36],['G17',46.6,40,43.7],['G19',41.5,0,26],['G02',45.7,0,32]].forEach(function(g, i) {
    var x = l + 3 + i * Math.round((r - l + 5) / 8);
    for(var k = 1; k < 4; k++) {
      if(g[k]) s += '<rect x="' + (x + (k - 1) * 13) + '" y="' + y(g[k]) + '" width="10" height="' + (b - y(g[k])) + '" fill="' + (k == 1 ? BLUE : '#b400c8') + '"/>';
    }
    s += line(x, b + 1, x + 36, b + 1, '#777', 2) + text(x + 18, b + 19, g[0], 'middle', 'fill="#d0d0d0"');
  });
  svg.innerHTML = s;
}

var drawRuler = function() {
  var svg = document.getElementById('ruler');
  var w = svg.clientWidth, k = w / 22040, t0 = 432212, s = '';
  for(var t = 432300; t < t0 + w / k; t += 100) {
    var x = Math.round((t - t0) * k) + .5, major = t % 1000 == 0;
    s += line(x, 24, x, major ? 35 : 28, '#c8c8c8');
    if(major) s += text(x, 17, t, 'middle', 'fill="#a8a8a8"');
  }
  x = (NOW - t0) * k;
  svg.innerHTML = s + line(x, 0, x, 54, ORANGE, 3);
}

var drawTracks = function() {
  var s = '';
  ['M0 0L100 131 240 318','M55 0L159 131 300 318','M117 0L219 131','M178 0L281 131','M233 0L334 131','M282 0L317 37Q360 75 410 150L451 210 535 318','M288 0L340 70 375 110 448 205 535 326',
   'M336 0L486 191 535 254','M374 0L535 203','M411 0L475 84 535 160','M416 0L475 76 535 150','M0 75L69 164','M0 97L69 190','M0 151L69 240','M0 229L69 318','M0 287L34 324 69 372',
   'M0 357L50 420 98 483','M0 366L44 422 90 483','M410 156L490 262 535 316','M410 222L535 382','M410 221L448 205Q486 185 510 195T535 212','M410 292L470 372 535 449','M410 367L450 425 496 483',
   'M410 403Q460 404 535 414','M410 447L440 483','M120 447Q100 458 84 480','M132 447L84 478','M126 447L153 483','M174 447L200 483','M245 462L260 483','M293 447L322 483','M318 447L363 483','M348 447L377 483'].forEach(function(d) {
    s += path(d, '#e6e61e', 1.6, 'transform="translate(1 -1)"') + path(d, '#1fd000', 1.7);
  });
  document.getElementById('tracks').innerHTML = s;
}

var draw = function() {
  drawSeparation();
  drawStdDev();
  drawSnr();
  drawRuler();
}

drawSky();
drawTracks();
draw();
window.onresize = draw;
```
